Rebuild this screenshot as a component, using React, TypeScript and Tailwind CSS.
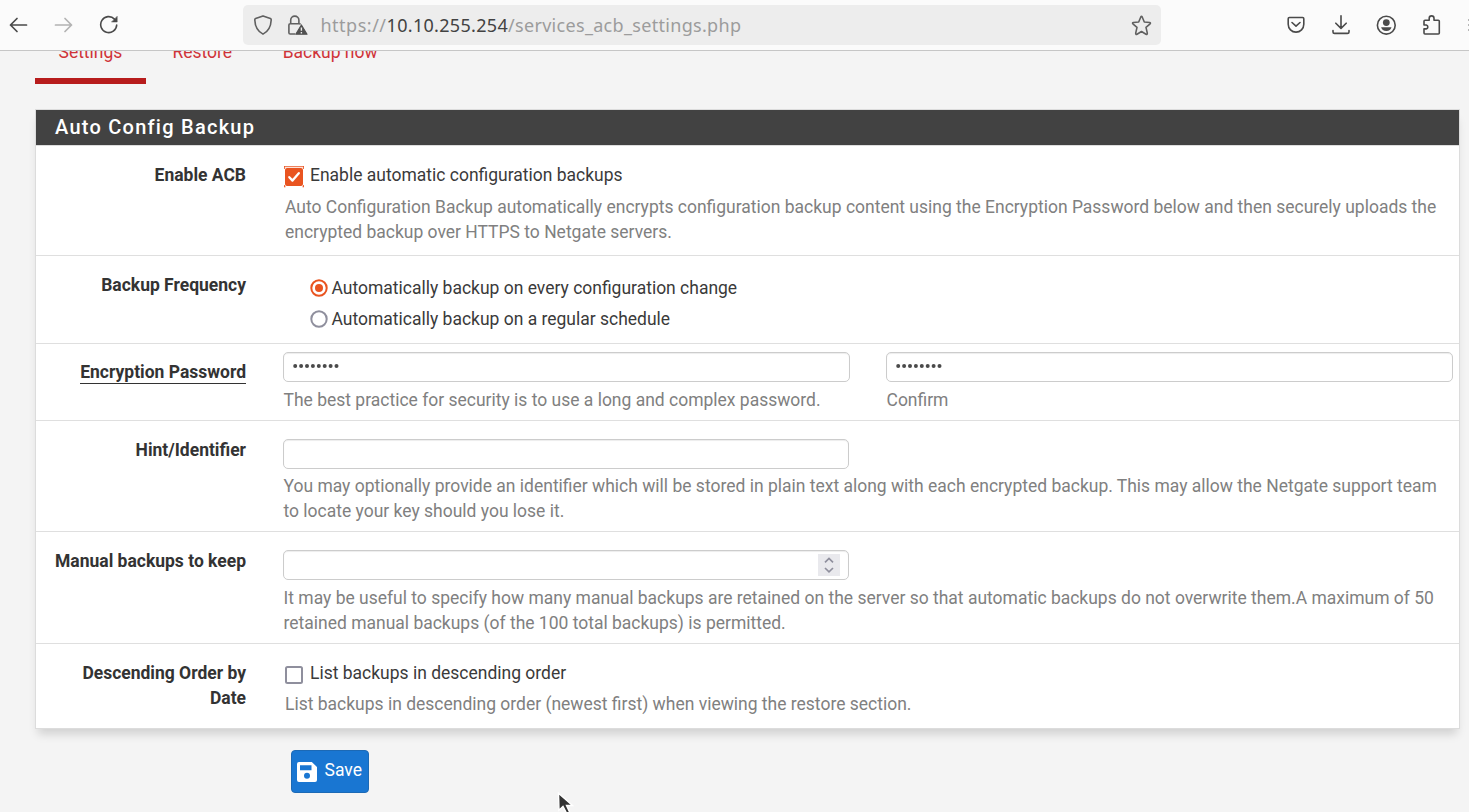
import React from "react";

type RowProps = { label: React.ReactNode; height: string; labelTop: string; children: React.ReactNode };

function Row({ label, height, labelTop, children }: RowProps) {
  return (
    <div className={`flex border-b border-[#dfdfdf] ${height}`}>
      <div className={`w-[210px] shrink-0 text-right font-bold text-[#333] ${labelTop}`}>{label}</div>
      <div className="ml-[37.5px] min-w-0 flex-1">{children}</div>
    </div>
  );
}

function Line({ children, className = "" }: { children: React.ReactNode; className?: string }) {
  return <span className={`block w-max whitespace-nowrap ${className}`}>{children}</span>;
}

const field =
  "-ml-[0.5px] flex h-[30px] rounded-[5px] border border-[#ccc] bg-white shadow-[inset_0_1px_1px_rgba(0,0,0,0.075)]";

function Dots() {
  return (
    <svg width="48" height="6" viewBox="0 0 48 6" className="ml-[8.5px] mt-[9.5px]" fill="#4a4a4a">
      {[0, 1, 2, 3, 4, 5, 6, 7].map((i) => (
        <circle key={i} cx={2.2 + i * 5.9} cy="3" r="2" />
      ))}
    </svg>
  );
}

function Toolbar() {
  return (
    <header className="flex h-[51px] shrink-0 items-center border-b border-[#c6c6c6] bg-[#fbfbfb] text-[#4a4a4a]">
      <svg className="ml-[8px] shrink-0" width="20" height="20" viewBox="0 0 20 20" fill="none" stroke="currentColor" strokeWidth="1.7" strokeLinecap="round" strokeLinejoin="round">
        <path d="M18.5 10H2.5M9 3.5L2.5 10L9 16.5" />
      </svg>
      <svg className="ml-[26px] shrink-0 text-[#b3b3b3]" width="20" height="20" viewBox="0 0 20 20" fill="none" stroke="currentColor" strokeWidth="1.7" strokeLinecap="round" strokeLinejoin="round">
        <path d="M1.5 10H17.5M11 3.5L17.5 10L11 16.5" />
      </svg>
      <svg className="ml-[25px] shrink-0" width="20" height="20" viewBox="0 0 20 20" fill="none" stroke="currentColor" strokeWidth="1.6" strokeLinecap="round">
        <path d="M15.5 4.1A8 8 0 1 0 17.7 10" />
        <path d="M18.2 1.6V7H12.8Z" fill="currentColor" strokeWidth="0.5" strokeLinejoin="round" />
      </svg>
      <div className="ml-[124px] flex h-10 w-[918px] shrink-0 items-center rounded-[5px] bg-[#ededed]">
        <svg className="ml-[10px] shrink-0 text-[#606060]" width="20" height="20" viewBox="0 0 20 20" fill="none" stroke="currentColor" strokeWidth="1.6" strokeLinejoin="round">
          <path d="M10 0.9L17.4 3.6Q18.3 4 18.2 5C17.9 11.5 15.5 16.4 10 19.1C4.5 16.4 2.1 11.5 1.8 5Q1.7 4 2.6 3.6Z" />
        </svg>
        <svg className="ml-[14px] shrink-0 text-[#606060]" width="21" height="20" viewBox="0 0 21 20" fill="none" stroke="currentColor" strokeWidth="1.6" strokeLinejoin="round">
          <path d="M8.2 19H3.2Q1.9 19 1.9 17.7V10.1Q1.9 8.8 3.2 8.8H12.3Q13.3 8.8 13.5 9.5M3.7 8.6V5.2A4 4 0 0 1 11.9 5.2V8.6" />
          <path d="M14.4 10L20 19.2H8.8Z" fill="#505050" stroke="#505050" strokeWidth="1.2" />
          <path d="M14.4 12.6V15.7M14.4 17V18.4" stroke="#ededed" strokeWidth="1.4" />
        </svg>
        <span className="ml-[12.5px] w-[430px] whitespace-pre pb-px font-['Noto_Sans',sans-serif] text-[18px] leading-6 tracking-[0.31px] text-[#9c9c9c]">
          <span className="tracking-[0.5px]">https://</span>
          <span className="text-[#424242]">10.10.255.254</span>/services_acb_settings.php
        </span>
        <svg className="ml-auto mr-[9.5px] shrink-0 text-[#606060]" width="21" height="21" viewBox="0 0 21 21" fill="none" stroke="currentColor" strokeWidth="1.6" strokeLinejoin="round">
          <path d="M9.8 2Q10.5 0.8 11.2 2L13.3 7L18.6 7.5Q20 7.8 19.1 8.8L15 12.4L16.3 18.2Q16.3 19.8 15 19.2L10.5 16.5L6 19.2Q4.7 19.8 4.7 18.2L6 12.4L1.9 8.8Q1 7.8 2.4 7.5L7.7 7Z" />
        </svg>
      </div>
      <div className="ml-[126px] flex shrink-0 items-center">
        <svg width="18" height="18" viewBox="0 0 18 18" fill="none" stroke="currentColor" strokeWidth="1.6" strokeLinecap="round" strokeLinejoin="round">
          <path d="M2.4 1.5H15.6Q16.8 1.5 16.8 2.7V8.3A7.8 7.8 0 0 1 1.2 8.3V2.7Q1.2 1.5 2.4 1.5ZM5 6.5L9 10.2L13 6.5" />
        </svg>
        <svg className="ml-[26.5px]" width="18" height="20" viewBox="0 0 18 20" fill="none" stroke="currentColor" strokeWidth="1.6" strokeLinecap="round" strokeLinejoin="round">
          <path d="M9 0.8V13.2M3.8 8.2L9 13.4L14.2 8.2M1 15.5V17Q1 18.4 2.5 18.4H15.5Q17 18.4 17 17V15.5" />
        </svg>
        <svg className="ml-[26.5px]" width="20" height="20" viewBox="0 0 20 20" fill="none" stroke="currentColor" strokeWidth="1.6">
          <circle cx="10.3" cy="10.2" r="8.9" />
          <circle cx="10.3" cy="7.6" r="3.4" fill="currentColor" stroke="none" />
          <path d="M5.1 12.3H15.5Q14.6 16 10.3 16Q6 16 5.1 12.3Z" fill="currentColor" stroke="none" />
        </svg>
        <svg className="ml-[26px]" width="19" height="20" viewBox="0 0 19 20" fill="none" stroke="currentColor" strokeWidth="1.6" strokeLinejoin="round">
          <path d="M2 10V6.2Q2 5.2 3 5.2H7.2V3.3A2.4 2.4 0 0 1 12 3.3V5.2H16.3Q17.3 5.2 17.3 6.2V18Q17.3 19 16.3 19H3Q2 19 2 18V13.9H4.3A2 2 0 0 0 4.3 10Z" />
        </svg>
        <svg className="ml-[26px]" width="3" height="16" viewBox="0 0 3 16" fill="none" stroke="#a0a0a0" strokeWidth="1.4">
          <path d="M1 3H3M1 8H3M1 13H3" />
        </svg>
      </div>
    </header>
  );
}

export default function App() {
  return (
    <div className="flex h-[812px] w-[1469px] flex-col overflow-hidden bg-[#f4f4f4] font-['Roboto',sans-serif] text-[17.49px] leading-[25px] text-[#3a3a3a]">
      <Toolbar />
      <main className="relative h-[761px] overflow-hidden">
        <nav className="ml-[35px] flex h-[33px] text-[#cf3338]">
          <div className="h-[33px] w-[111px] border-b-[6px] border-[#b71c1c]">
            <Line className="-mt-[11px] ml-[23.5px]">Settings</Line>
          </div>
          <Line className="-mt-[11px] ml-[26.5px]">Restore</Line>
          <Line className="-mt-[11px] ml-[50.5px]">Backup now</Line>
        </nav>
        <section className="ml-[35px] mt-[25px] h-[620px] w-[1425px] border border-[#dcdcdc] bg-white shadow-[0_8px_9px_-3px_rgba(0,0,0,0.15)]">
          <h2 className="flex h-[36px] items-center border-b border-[#ddd] bg-[#424242] pl-[19px] text-[20px] font-medium text-white">
            <Line className="tracking-[1.25px]">Auto Config Backup</Line>
          </h2>
          <Row label="Enable ACB" height="h-[110px]" labelTop="pt-[17px]">
            <div className="flex pt-[17px]">
              <svg className="mt-[3px] shrink-0" width="20" height="22" viewBox="0 0 20 22">
                <path d="M0 0.7H20M0 20.8H1.5M18.5 20.8H20M0.4 0V3M19.6 0V3M0.4 19V21M19.6 19V21" stroke="#e95420" strokeWidth="0.9" fill="none" />
                <rect x="1" y="2" width="18" height="18" rx="2" fill="#e95420" />
                <path d="M5.3 11.2L8.5 14.6L14.8 7.2" fill="none" stroke="#fff" strokeWidth="2.3" strokeLinecap="round" strokeLinejoin="round" />
              </svg>
              <Line className="ml-[6.5px]">Enable automatic configuration backups</Line>
            </div>
            <div className="ml-[1.5px] mt-[7px] text-[#808080]">
              <Line>Auto Configuration Backup automatically encrypts configuration backup content using the Encryption Password below and then securely uploads the</Line>
              <Line>encrypted backup over HTTPS to Netgate servers.</Line>
            </div>
          </Row>
          <Row label="Backup Frequency" height="h-[88px]" labelTop="pt-[17px]">
            <div className="flex items-center pl-[26px] pt-[20px]">
              <svg className="-mt-[2px]" width="18" height="18" viewBox="0 0 18 18">
                <circle cx="9" cy="9" r="7.7" fill="#fff" stroke="#e95420" strokeWidth="2" />
                <circle cx="9" cy="9" r="4" fill="#e95420" />
              </svg>
              <Line className="ml-[4px]">Automatically backup on every configuration change</Line>
            </div>
            <div className="flex items-center pl-[26px] pt-[6px]">
              <svg className="-mt-[2px]" width="18" height="18" viewBox="0 0 18 18">
                <circle cx="9" cy="9" r="7.7" fill="#fff" stroke="#8f8f9d" strokeWidth="2" />
              </svg>
              <Line className="ml-[4px]">Automatically backup on a regular schedule</Line>
            </div>
          </Row>
          <Row label={<span className="inline-block border-b-[1.5px] border-[#333] leading-[21px]">Encryption Password</span>} height="h-[77px]" labelTop="pt-[16px]">
            <div className="flex gap-[37px] pt-[8px] text-[#808080]">
              <div className="w-[566px]">
                <div className={field}><Dots /></div>
                <Line className="mt-[6px]">The best practice for security is to use a long and complex password.</Line>
              </div>
              <div className="w-[566px]">
                <div className={field}><Dots /></div>
                <Line className="mt-[6px]">Confirm</Line>
              </div>
            </div>
          </Row>
          <Row label="Hint/Identifier" height="h-[111px]" labelTop="pt-[17px]">
            <div className="pt-[18px] text-[#808080]">
              <div className={`${field} mb-[5px] w-[566px]`} />
              <Line>You may optionally provide an identifier which will be stored in plain text along with each encrypted backup. This may allow the Netgate support team</Line>
              <Line>to locate your key should you lose it.</Line>
            </div>
          </Row>
          <Row label="Manual backups to keep" height="h-[112px]" labelTop="pt-[17px]">
            <div className="pt-[18px] text-[#808080]">
              <div className={`${field} mb-[6px] w-[566px] items-center justify-end`}>
                <svg className="mr-[8px]" width="22" height="22" viewBox="0 0 22 22">
                  <rect width="22" height="22" fill="#e9e9ed" />
                  <path d="M7 8.3L11 4.5L15 8.3M7 14L11 17.8L15 14" fill="none" stroke="#8f8f9d" strokeWidth="1.7" />
                </svg>
              </div>
              <Line>It may be useful to specify how many manual backups are retained on the server so that automatic backups do not overwrite them.A maximum of 50</Line>
              <Line>retained manual backups (of the 100 total backups) is permitted.</Line>
            </div>
          </Row>
          <Row label={<>Descending Order by<br />Date</>} height="h-[84px] border-b-0" labelTop="pt-[17px]">
            <div className="flex pt-[17px]">
              <svg className="ml-px mt-[5px] shrink-0" width="18" height="18" viewBox="0 0 18 18">
                <rect x="1" y="1" width="16" height="16" rx="1.5" fill="#fff" stroke="#8f8f9d" strokeWidth="2" />
              </svg>
              <Line className="ml-[7.5px]">List backups in descending order</Line>
            </div>
            <Line className="ml-[1.5px] mt-[6px] text-[#808080]">List backups in descending order (newest first) when viewing the restore section.</Line>
          </Row>
        </section>
        <button className="ml-[291px] mt-[21px] flex h-[43px] w-[78px] rounded-[4px] border border-[#1c69b5] bg-[#1976d2] pl-[5px] text-[17.5px] text-white">
          <svg className="mt-[10.5px]" width="20" height="20" viewBox="0 0 20 20">
            <path fillRule="evenodd" fill="#fff" d="M2 0H14.8L20 5V18Q20 20 18 20H2Q0 20 0 18V2Q0 0 2 0ZM3 3.2V8.2H14.5V3.2ZM10 10.8A3 3 0 1 0 10 16.8A3 3 0 1 0 10 10.8Z" />
          </svg>
          <Line className="ml-[7.5px] mt-[7px]">Save</Line>
        </button>
        <svg className="absolute left-[556.5px] top-[741px]" width="18" height="22" viewBox="0 0 18 22">
          <path d="M1.5 1.2L2 18.2L6 14.5L10 22L13 21L9.5 13.5H15.5Z" fill="#333" stroke="#fff" strokeWidth="1.4" />
        </svg>
      </main>
    </div>
  );
}
